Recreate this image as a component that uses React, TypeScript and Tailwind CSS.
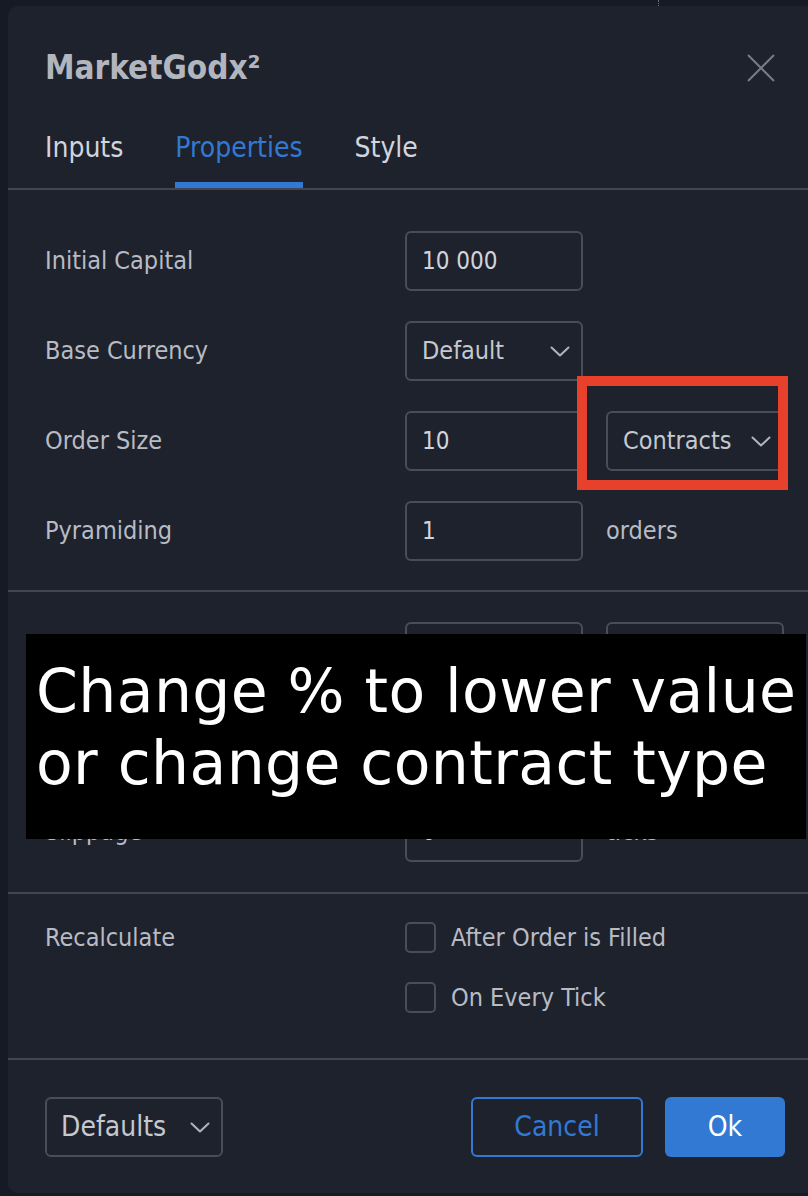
import React from "react";

const FONT = "font-['DejaVu_Sans_Condensed','DejaVu_Sans',sans-serif] font-stretch-condensed";

function Chevron() {
  return (
    <svg width="20" height="11" viewBox="0 0 20 11" fill="none">
      <polyline points="1.5,1.5 10,9.5 18.5,1.5" stroke="#b2b5be" strokeWidth="2" strokeLinecap="round" strokeLinejoin="round" />
    </svg>
  );
}

function Input({ value }: { value?: string }) {
  return (
    <div className="w-[178px] h-[60px] border-2 border-[#4a4d58] rounded-[6px] flex items-center pl-[15px] text-[24px] text-[#d1d4dc]">
      {value}
    </div>
  );
}

function Select({ value }: { value: string }) {
  return (
    <div className="w-[178px] h-[60px] border-2 border-[#4a4d58] rounded-[6px] flex items-center justify-between pl-[15px] pr-[11px] text-[25px] text-[#c5c8cf]">
      <span>{value}</span>
      <Chevron />
    </div>
  );
}

function Row({ label, children }: { label: string; children?: React.ReactNode }) {
  return (
    <div className="flex items-center h-[60px]">
      <div className="w-[360px] text-[25px] text-[#b8bbc3]">{label}</div>
      <div className="flex items-center gap-[23px]">{children}</div>
    </div>
  );
}

function Check({ label }: { label: string }) {
  return (
    <div className="flex items-center h-[31px] gap-[15px]">
      <div className="w-[31px] h-[31px] border-2 border-[#4a4d58] rounded-[5px]" />
      <span className="text-[25px] text-[#b8bbc3]">{label}</span>
    </div>
  );
}

export default function App() {
  return (
    <div className={`relative w-[808px] h-[1196px] overflow-hidden bg-[#161a25] ${FONT}`}>
      <div className="absolute left-[658px] top-0 w-px h-[6px] border-l border-dotted border-[#6a6d78]" />
      <div className="ml-[8px] pt-[6px]">
        <div className="w-[806px] h-[1187px] rounded-[10px] bg-[#1e222d] flex flex-col">
          {/* header */}
          <div className="h-[124px] flex items-center justify-between pl-[37px] pr-[39px]">
            <div className="text-[33px] leading-[40px] font-bold text-[#b2b5be]">MarketGodx²</div>
            <svg width="28" height="28" viewBox="0 0 28 28" fill="none">
              <path d="M1 1 L27 27 M27 1 L1 27" stroke="#787b86" strokeWidth="2" />
            </svg>
          </div>
          {/* tabs */}
          <div className="h-[60px] flex gap-[52px] pl-[37px] border-b-2 border-[#434651]">
            {["Inputs", "Properties", "Style"].map((t) => (
              <div key={t} className="flex flex-col">
                <div className={`h-[36px] leading-[36px] text-[28px] ${t === "Properties" ? "text-[#3179d3]" : "text-[#d1d4dc]"}`}>{t}</div>
                <div className={`mt-[16px] h-[6px] ${t === "Properties" ? "bg-[#3179d3]" : ""}`} />
              </div>
            ))}
          </div>
          {/* section 1 */}
          <div className="pt-[41px] pb-[29px] pl-[37px] flex flex-col gap-[30px] border-b-2 border-[#434651]">
            <Row label="Initial Capital">
              <Input value="10 000" />
            </Row>
            <Row label="Base Currency">
              <Select value="Default" />
            </Row>
            <Row label="Order Size">
              <Input value="10" />
              <Select value="Contracts" />
            </Row>
            <Row label="Pyramiding">
              <Input value="1" />
              <span className="text-[25px] text-[#b8bbc3]">orders</span>
            </Row>
          </div>
          {/* section 2 (mostly covered by the note) */}
          <div className="pt-[30px] pb-[30px] pl-[37px] flex flex-col gap-[30px] border-b-2 border-[#434651]">
            <Row label="Commission">
              <Input value="0" />
              <Select value="%" />
            </Row>
            <Row label="Verify Price For Limit Orders">
              <Input value="0" />
              <span className="text-[25px] text-[#b8bbc3]">ticks</span>
            </Row>
            <Row label="Slippage">
              <Input value="0" />
              <span className="text-[25px] text-[#b8bbc3]">ticks</span>
            </Row>
          </div>
          {/* section 3 */}
          <div className="pt-[28px] pb-[45px] pl-[37px] flex border-b-2 border-[#434651]">
            <div className="w-[360px] h-[31px] flex items-center text-[25px] text-[#b8bbc3]">Recalculate</div>
            <div className="flex flex-col gap-[29px]">
              <Check label="After Order is Filled" />
              <Check label="On Every Tick" />
            </div>
          </div>
          {/* footer */}
          <div className="flex-1 pt-[37px] pl-[37px] pr-[29px] flex items-start justify-between">
            <div className="w-[178px] h-[60px] border-2 border-[#4a4d58] rounded-[6px] flex items-center justify-between pl-[14px] pr-[11px] text-[28px] text-[#c5c8cf]">
              <span>Defaults</span>
              <Chevron />
            </div>
            <div className="flex gap-[22px]">
              <div className="w-[172px] h-[60px] border-2 border-[#3179d3] rounded-[6px] flex items-center justify-center text-[28px] text-[#3179d3]">Cancel</div>
              <div className="w-[120px] h-[60px] bg-[#3179d3] rounded-[6px] flex items-center justify-center text-[28px] text-white">Ok</div>
            </div>
          </div>
        </div>
      </div>
      {/* annotations */}
      <div className="absolute left-[577px] top-[376px] w-[211px] h-[114px] border-[10px] border-[#e8412b]" />
      <div className="absolute left-[26px] top-[634px] w-[780px] h-[205px] bg-black pt-[21px] pl-[10px] font-['DejaVu_Sans',sans-serif] font-stretch-normal text-[60px] leading-[72px] tracking-[0.4px] text-white">
        <div>Change % to lower value</div>
        <div>or change contract type</div>
      </div>
    </div>
  );
}
